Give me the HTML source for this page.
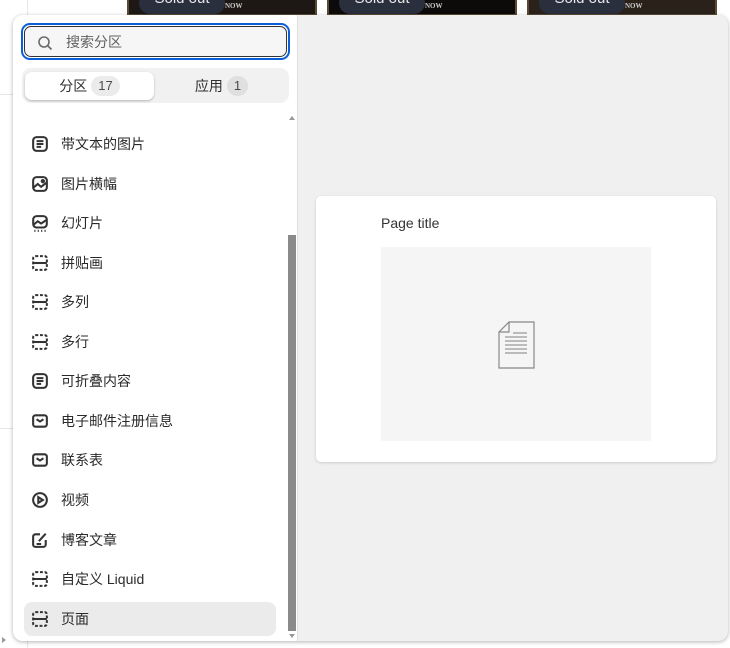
<!DOCTYPE html>
<html><head><meta charset="utf-8"><style>
*{box-sizing:border-box;margin:0;padding:0}
body{width:730px;height:648px;overflow:hidden;background:#fff;font-family:"Liberation Sans","Noto Sans CJK SC",sans-serif;position:relative;color:#303030}
.strip{position:absolute;left:0;top:0;width:28px;height:648px;background:#fff;border-right:1px solid #e6e6e6}
.thumb{position:absolute;top:0;height:16px;width:190px;background:#1d1814;border:2px solid #5a4a35;border-top:none}
.pill{position:absolute;left:10px;top:-8px;width:86px;height:22px;border-radius:11px;background:#2a2f3d;color:#e8e8e8;font-size:15px;text-align:center;line-height:14px}
.now{position:absolute;left:96px;top:2px;font-size:7px;color:#ccc;font-family:"Liberation Serif",serif;font-weight:bold}
.pop{position:absolute;left:13px;top:15px;width:715px;height:626px;border-radius:10px;background:#f0f0f0;box-shadow:0 1px 4px rgba(0,0,0,.3);overflow:hidden}
.left{position:absolute;left:0;top:0;width:285px;height:626px;background:#fff;border-right:1px solid #e0e0e0}
.search{position:absolute;left:8px;top:8px;width:269px;height:37px;border:2px solid #0b5ed7;border-radius:9px;padding:1px}
.search .in{width:100%;height:100%;border:1px solid #333;border-radius:7px;background:#f6f6f6;font-size:14px;color:#616161;line-height:31px;padding-left:41px;position:relative}
.search svg{position:absolute;left:12px;top:8px}
.tabs{position:absolute;left:9px;top:53px;width:267px;height:35px;background:#f1f1f1;border-radius:9px}
.tab{position:absolute;top:4px;height:28px;width:129px;font-size:14px;text-align:center;line-height:28px;color:#303030}
.tab.a{left:3px;background:#fff;border-radius:7px;box-shadow:0 1px 2px rgba(0,0,0,.25)}
.tab.b{left:135px}
.badge{display:inline-block;background:#ebebeb;border-radius:10px;padding:0 7px;height:20px;line-height:20px;font-size:13px;margin-left:4px;color:#4a4a4a;vertical-align:1px}
.b .badge{background:#e0e0e0}
.item{position:absolute;left:11px;width:252px;height:34px;font-size:14px;line-height:34px;padding-left:37px;color:#2a2a2a;border-radius:8px}
.item svg{position:absolute;left:8px;top:9px}
.item.sel{background:#ebebeb}
.sb{position:absolute;left:275px;top:220px;width:8px;height:396px;background:#8a8a8a}
.arr{position:absolute;left:276px;width:0;height:0;border-left:3px solid transparent;border-right:3px solid transparent}
.card{position:absolute;left:303px;top:181px;width:400px;height:266px;background:#fff;border-radius:5px;box-shadow:0 1px 3px rgba(0,0,0,.15)}
.card .t{position:absolute;left:65px;top:19px;font-size:14px;color:#333}
.card .g{position:absolute;left:65px;top:51px;width:270px;height:194px;background:#f5f5f5}
</style></head><body>
<div class="strip"></div>
<div style="position:absolute;left:0;top:94px;width:13px;border-top:1px solid #e6e6e6"></div>
<div style="position:absolute;left:0;top:428px;width:13px;border-top:1px solid #e6e6e6"></div>
<div class="thumb" style="left:127px"><div class="pill">Sold out</div><div class="now">NOW</div></div>
<div class="thumb" style="left:327px;background:#0d0b0a"><div class="pill">Sold out</div><div class="now">NOW</div></div>
<div class="thumb" style="left:527px;background:#2a211b"><div class="pill">Sold out</div><div class="now">NOW</div></div>
<div class="pop">
<div class="left">
<div class="search"><div class="in"><svg width="16" height="16" viewBox="0 0 16 16" fill="none" stroke="#6b6b6b" stroke-width="1.6"><circle cx="7" cy="7" r="5"/><path d="M11 11l3.5 3.5"/></svg>搜索分区</div></div>
<div class="tabs"><div class="tab a">分区<span class="badge">17</span></div><div class="tab b">应用<span class="badge">1</span></div></div>
<div class="arr" style="top:101px;border-bottom:4px solid #999"></div>
<div class="sb"></div>
<div class="arr" style="top:619px;border-top:4px solid #999"></div>
<div class="item" style="top:112px"><svg width="16" height="16" viewBox="0 0 14 14" fill="none" stroke="#333" stroke-width="1.8"><rect x="1" y="1" width="12" height="12" rx="3"/><path d="M4 4.5h6M4 7h6M4 9.5h4"/></svg>带文本的图片</div>
<div class="item" style="top:152px"><svg width="16" height="16" viewBox="0 0 14 14" fill="none" stroke="#333" stroke-width="1.8"><rect x="1" y="1" width="12" height="12" rx="3"/><path d="M1.5 10l3.5-3 3 2.5 4.5-3.5"/><circle cx="9.5" cy="4.5" r="1"/></svg>图片横幅</div>
<div class="item" style="top:191px"><svg width="16" height="17" viewBox="0 0 14 15" fill="none" stroke="#333" stroke-width="1.8"><rect x="1" y="1" width="12" height="10" rx="3"/><path d="M1.5 8.5l3.5-3 3 2 4.5-3"/><path d="M2 14h1M5 14h1M8 14h1M11 14h1"/></svg>幻灯片</div>
<div class="item" style="top:231px"><svg width="16" height="16" viewBox="0 0 14 14" fill="none" stroke="#333" stroke-width="1.8" stroke-dasharray="2.5 1.5"><rect x="1" y="1" width="12" height="12" rx="2"/><path d="M1 7h12" stroke-dasharray="none"/></svg>拼贴画</div>
<div class="item" style="top:270px"><svg width="16" height="16" viewBox="0 0 14 14" fill="none" stroke="#333" stroke-width="1.8" stroke-dasharray="2.5 1.5"><rect x="1" y="1" width="12" height="12" rx="2"/><path d="M1 7h12" stroke-dasharray="none"/></svg>多列</div>
<div class="item" style="top:310px"><svg width="16" height="16" viewBox="0 0 14 14" fill="none" stroke="#333" stroke-width="1.8" stroke-dasharray="2.5 1.5"><rect x="1" y="1" width="12" height="12" rx="2"/><path d="M1 7h12" stroke-dasharray="none"/></svg>多行</div>
<div class="item" style="top:349px"><svg width="16" height="16" viewBox="0 0 14 14" fill="none" stroke="#333" stroke-width="1.8"><rect x="1" y="1" width="12" height="12" rx="3"/><path d="M4 4.5h6M4 7h6M4 9.5h4"/></svg>可折叠内容</div>
<div class="item" style="top:389px"><svg width="16" height="16" viewBox="0 0 14 14" fill="none" stroke="#333" stroke-width="1.8"><rect x="1" y="2" width="12" height="10" rx="2"/><path d="M4 5.5l3 2 3-2"/></svg>电子邮件注册信息</div>
<div class="item" style="top:428px"><svg width="16" height="16" viewBox="0 0 14 14" fill="none" stroke="#333" stroke-width="1.8"><rect x="1" y="2" width="12" height="10" rx="2"/><path d="M4 5.5l3 2 3-2"/></svg>联系表</div>
<div class="item" style="top:468px"><svg width="16" height="16" viewBox="0 0 14 14" fill="none" stroke="#333" stroke-width="1.8"><circle cx="7" cy="7" r="6"/><path d="M5.5 4.5v5l4-2.5z"/></svg>视频</div>
<div class="item" style="top:508px"><svg width="16" height="16" viewBox="0 0 14 14" fill="none" stroke="#333" stroke-width="1.8"><path d="M7 2H3a2 2 0 0 0-2 2v7a2 2 0 0 0 2 2h7a2 2 0 0 0 2-2V7"/><path d="M6 8l6-6.5"/><path d="M4 10.5h4"/></svg>博客文章</div>
<div class="item" style="top:547px"><svg width="16" height="16" viewBox="0 0 14 14" fill="none" stroke="#333" stroke-width="1.8" stroke-dasharray="2.5 1.5"><rect x="1" y="1" width="12" height="12" rx="2"/><path d="M1 7h12" stroke-dasharray="none"/></svg>自定义 Liquid</div>
<div class="item sel" style="top:587px"><svg width="16" height="16" viewBox="0 0 14 14" fill="none" stroke="#333" stroke-width="1.8" stroke-dasharray="2.5 1.5"><rect x="1" y="1" width="12" height="12" rx="2"/><path d="M1 7h12" stroke-dasharray="none"/></svg>页面</div>
</div>
<div class="card"><div class="t">Page title</div><div class="g">
<svg style="position:absolute;left:117px;top:74px" width="38" height="48" viewBox="0 0 38 48" fill="none" stroke="#888" stroke-width="1.2"><path d="M11 1h25v46H1V11z"/><path d="M1 11h10V1"/><path d="M15 12h14M7 16h22M7 20h22M7 24h22M7 28h22M7 32h22" stroke="#999"/></svg>
</div></div>
</div>
<div style="position:absolute;left:2px;top:637px;border-left:4px solid #999;border-top:3px solid transparent;border-bottom:3px solid transparent"></div>
</body></html>
